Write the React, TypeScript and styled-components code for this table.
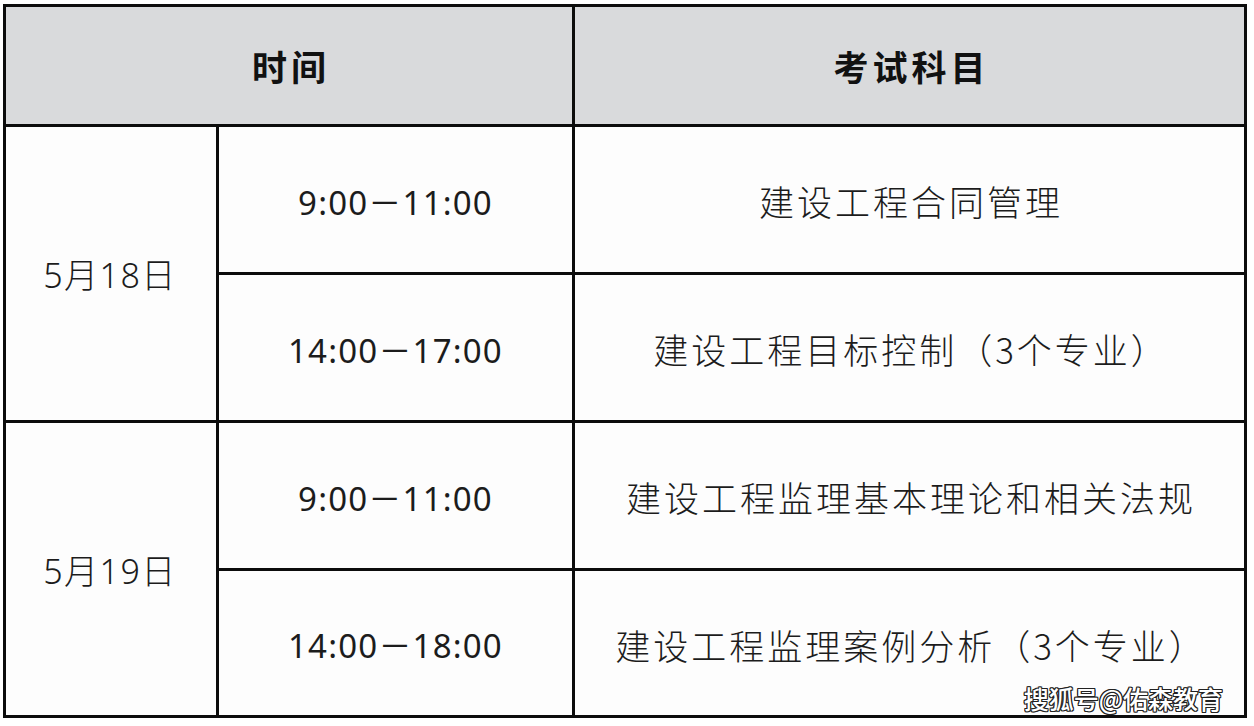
import React from 'react';
import styled, { createGlobalStyle } from 'styled-components';

type Slot = { time: string; subject: string };
type Day = { date: string; slots: Slot[] };

const schedule: Day[] = [
  {
    date: '5月18日',
    slots: [
      { time: '9:00－11:00', subject: '建设工程合同管理' },
      { time: '14:00－17:00', subject: '建设工程目标控制（3个专业）' },
    ],
  },
  {
    date: '5月19日',
    slots: [
      { time: '9:00－11:00', subject: '建设工程监理基本理论和相关法规' },
      { time: '14:00－18:00', subject: '建设工程监理案例分析（3个专业）' },
    ],
  },
];

const GlobalStyle = createGlobalStyle`
  html, body {
    margin: 0;
    padding: 0;
    background: #ffffff;
  }
  body {
    font-family: "Noto Sans", "Noto Sans CJK SC", sans-serif;
  }
`;

const App = () => {
  return (
    <>
      <GlobalStyle />
      <Page>
        <Table>
          <HeadCell $span={2}>时间</HeadCell>
          <HeadCell>考试科目</HeadCell>
          {schedule.map((day) => (
            <React.Fragment key={day.date}>
              <DateCell $rows={day.slots.length}>{day.date}</DateCell>
              {day.slots.map((slot) => (
                <React.Fragment key={slot.time + slot.subject}>
                  <TimeCell>{slot.time}</TimeCell>
                  <SubjectCell>{slot.subject}</SubjectCell>
                </React.Fragment>
              ))}
            </React.Fragment>
          ))}
          <Watermark>搜狐号@佑森教育</Watermark>
        </Table>
      </Page>
    </>
  );
};

const Page = styled.div`
  width: 1254px;
  height: 726px;
  padding: 4px 0 0 3px;
  box-sizing: border-box;
  background: #ffffff;
`;

// black grid lines come from the background showing through the gaps
const Table = styled.div`
  position: relative;
  display: grid;
  grid-template-columns: 210px 353px 669px;
  grid-template-rows: 117px 145px 145px 145px 144px;
  gap: 3px;
  padding: 3px;
  width: 1244px;
  box-sizing: border-box;
  background: #0c0c0c;
`;

const Cell = styled.div`
  display: flex;
  align-items: center;
  justify-content: center;
  background: #fdfdfd;
  color: #1c1c1c;
  white-space: nowrap;
`;

const HeadCell = styled(Cell)<{ $span?: number }>`
  grid-column: span ${(p) => p.$span ?? 1};
  background: #d9dadc;
  color: #111;
  font-family: "Noto Sans CJK SC", sans-serif;
  font-size: 35px;
  font-weight: 700;
  letter-spacing: 4px;
  padding-left: 4px;
`;

const DateCell = styled(Cell)<{ $rows: number }>`
  grid-row: span ${(p) => p.$rows};
  font-size: 34px;
  font-weight: 300;
  letter-spacing: 1.5px;
  padding-right: 2px;
`;

const TimeCell = styled(Cell)`
  font-size: 33px;
  font-weight: 400;
  letter-spacing: 1.2px;
  padding-top: 2px;
`;

const SubjectCell = styled(Cell)`
  font-family: "Noto Sans CJK SC", sans-serif;
  font-size: 35px;
  font-weight: 300;
  letter-spacing: 3px;
  padding-top: 2px;
  padding-left: 3px;
`;

const Watermark = styled.span`
  position: absolute;
  right: 24px;
  bottom: 2px;
  font-family: "Noto Sans CJK SC", sans-serif;
  font-size: 25px;
  font-weight: 500;
  color: #ffffff;
  text-shadow: 1px 1px 0 #222, -1px -1px 0 #222, 1px -1px 0 #222, -1px 1px 0 #222,
    0 1px 0 #222, 1px 0 0 #222, 0 -1px 0 #222, -1px 0 0 #222;
`;

export default App;
